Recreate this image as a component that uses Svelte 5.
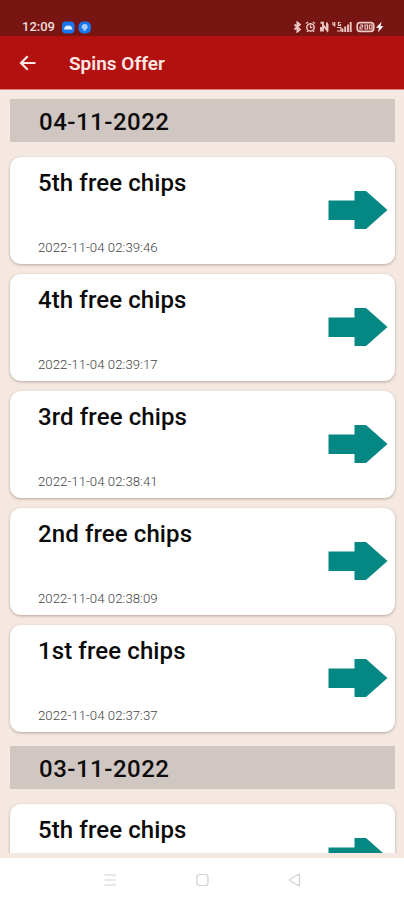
<script>
    let groups = [
        {
            date: "04-11-2022",
            offers: [
                { title: "5th free chips", time: "2022-11-04 02:39:46" },
                { title: "4th free chips", time: "2022-11-04 02:39:17" },
                { title: "3rd free chips", time: "2022-11-04 02:38:41" },
                { title: "2nd free chips", time: "2022-11-04 02:38:09" },
                { title: "1st free chips", time: "2022-11-04 02:37:37" }
            ]
        },
        {
            date: "03-11-2022",
            // the time of this one is scrolled out of view
            offers: [{ title: "5th free chips", time: "" }]
        }
    ];
</script>

<div class="screen">
    <div class="status-bar">
        <span class="clock">12:09</span>
        <svg class="apps" width="29" height="13" viewBox="0 0 29 13">
            <rect x="0" y="0.5" width="12.5" height="12" rx="4" fill="#1877ee" />
            <path d="M2 8.5c.2-2.4 1.7-4 4.2-4s4 1.6 4.2 4z" fill="#e6f0ff" />
            <rect x="16.5" y="0.5" width="12.5" height="12" rx="5" fill="#1877ee" />
            <path d="M22.7 3a2.8 2.8 0 0 1 2 5l-1 .4v1.6h-2V8.400l-1-.4a2.8 2.8 0 0 1 2-5z" fill="#a9cdfb" />
        </svg>
        <svg class="system" width="91" height="12" viewBox="0 0 91 12" fill="none" stroke="#ecc9c5">
            <path d="M1.5 3.5l5.5 5-2.7 2.3V1.2L7 3.5l-5.5 5" stroke-width="1.7" />
            <circle cx="17.5" cy="6.4" r="3.7" stroke-width="1.5" />
            <path d="M13 2.5l2-1.5M20 1l2 1.5M17.5 4.3v2.3h2M15 9.5l-1 1.5M20 9.5l1 1.5" stroke-width="1.3" />
            <path d="M28 10.5V6M27.5 1.7h3.500M30 10.500V4l4 5V1.500M34.500 3v7.500" stroke-width="1.9" />
            <path d="M40 1v3h2.500M41.700 1v4.500M47.500 1.500h-2v3h2V3M44 6.500h4v3.500h-4" stroke-width="1.2" />
            <path d="M49.500 11V7.500M52.200 11V5.500M55 11V3.500M57.700 11V1" stroke-width="1.9" />
            <rect x="64.200" y="1.700" width="16.500" height="8.600" rx="2.800" stroke-width="1.7" />
            <path d="M67 4h2.500v2H67v2h3M72 4h2.500v4H72zM76.500 4H79v4h-2.500z" stroke-width="1.2" />
            <path d="M88.500.8L83 6.700h3l-1 4.500 5.500-6h-3z" fill="#fff" stroke="none" />
        </svg>
    </div>

    <header class="app-bar">
        <svg class="back" width="18" height="16" viewBox="0 0 18 16">
            <path d="M16.500 8H2M8.700 1.200L2 8l6.700 6.800" fill="none" stroke="#ffe9e5" stroke-width="2.200" />
        </svg>
        <h1>Spins Offer</h1>
    </header>

    <main class="list">
        {#each groups as group}
            <h2 class="date">{group.date}</h2>
            <div class="offers">
                {#each group.offers as offer}
                    <div class="card">
                        <div class="text">
                            <h3>{offer.title}</h3>
                            <p>{offer.time}</p>
                        </div>
                        <svg class="arrow" width="60" height="40" viewBox="0 0 60 40">
                            <path d="M0.500 10.500H26.500V1H38L59.500 20 38 39H26.500V30H0.500z" fill="#058883" />
                        </svg>
                    </div>
                {/each}
            </div>
        {/each}
    </main>

    <nav class="nav-bar">
        <svg width="13" height="14" viewBox="0 0 13 14">
            <path d="M0.500 2h11.500M0.500 7h11.500M0.500 12h11.500" />
        </svg>
        <svg width="13" height="14" viewBox="0 0 13 14">
            <rect x="1" y="1.500" width="11" height="11" rx="2.500" />
        </svg>
        <svg width="13" height="14" viewBox="0 0 13 14">
            <path d="M11.500 2v10q0 1.200-1 .6L1.500 7.600q-.8-.6 0-1.200l9-5q1-.6 1 .6z" />
        </svg>
    </nav>
</div>

<style>
    :global(body) {
        margin: 0;
    }

    .screen {
        display: flex;
        flex-direction: column;
        width: 404px;
        height: 900px;
        overflow: hidden;
        background: #f4e8e0;
        font-family: Roboto, "Liberation Sans", sans-serif;
    }

    h1, h2, h3, p {
        margin: 0;
    }

    .status-bar {
        flex: none;
        display: flex;
        align-items: center;
        box-sizing: border-box;
        height: 36px;
        padding: 18px 20px 0 22px;
        background: #761512;
    }

    .clock {
        width: 40px;
        color: #f3dedb;
        font-size: 13px;
        font-weight: 500;
        line-height: 18px;
    }

    .system {
        margin-left: auto;
    }

    .app-bar {
        flex: none;
        display: flex;
        align-items: center;
        box-sizing: border-box;
        height: 54px;
        padding: 1px 19px 0;
        background: #b31110;
        border-bottom: 1px solid #d98583;
    }

    h1 {
        margin-left: 32px;
        padding-top: 1px;
        color: #ffe9e5;
        font-size: 19px;
        font-weight: 600;
        line-height: 24px;
    }

    .list {
        flex: none;
        box-sizing: border-box;
        height: 763px;
        margin-bottom: 5px;
        padding: 9px 9px 0 10px;
        overflow: hidden;
    }

    .date {
        height: 43px;
        padding-left: 29px;
        background: #d0c7c2;
        color: #0d0b0b;
        font-size: 24px;
        font-weight: 550;
        letter-spacing: 0.5px;
        line-height: 46px;
    }

    .offers {
        display: flex;
        flex-direction: column;
        gap: 10px;
        padding: 15px 0 14px;
    }

    .card {
        display: flex;
        align-items: center;
        justify-content: space-between;
        box-sizing: border-box;
        height: 107px;
        padding: 0 7px 0 28px;
        border-radius: 11px;
        background: #fff;
        box-shadow: 0 1px 3px rgba(90, 70, 60, 0.4);
    }

    .text {
        display: flex;
        flex-direction: column;
        justify-content: space-between;
        box-sizing: border-box;
        height: 107px;
        padding: 11px 0 7px;
    }

    h3 {
        color: #0b0b0b;
        font-size: 24px;
        font-weight: 550;
        letter-spacing: 0.1px;
        line-height: 30px;
    }

    p {
        color: #444;
        font-size: 13.2px;
        font-weight: 350;
        letter-spacing: 0.05px;
        line-height: 18px;
    }

    .arrow {
        padding-bottom: 2px;
    }

    .nav-bar {
        flex: 1;
        display: flex;
        align-items: center;
        justify-content: center;
        gap: 79px;
        padding-top: 2px;
        background: #fff;
    }

    .nav-bar svg {
        fill: none;
        stroke: #cfcfcf;
        stroke-width: 1.2;
    }
</style>
